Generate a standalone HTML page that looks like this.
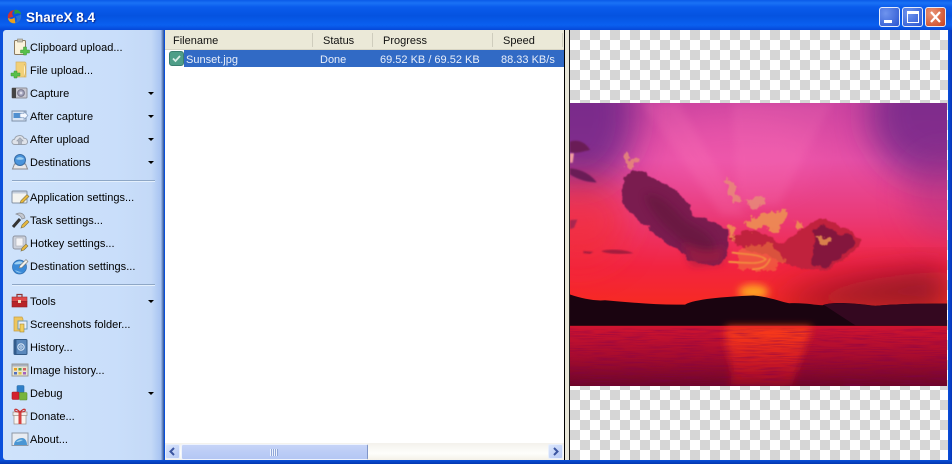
<!DOCTYPE html>
<html><head><meta charset="utf-8"><style>
*{box-sizing:border-box}
html,body{margin:0;padding:0}
body{width:952px;height:464px;overflow:hidden;position:relative;background:#0a50dc;font-family:"Liberation Sans",sans-serif}
.a{position:absolute}
#title{left:0;top:0;width:952px;height:30px;background:linear-gradient(#0a5ae8 0,#1a72f5 3px,#0a5cec 7px,#0553e0 16px,#0a60f0 25px,#0648d8 30px)}
#tt{left:26px;top:9px;font:bold 13.5px/17px "Liberation Sans",sans-serif;color:#fff;text-shadow:1px 1px 1px #0a2a90;white-space:nowrap;letter-spacing:0}
#side{left:3px;top:30px;width:161px;height:430px;background:linear-gradient(90deg,#cfe3fb 0,#c9defa 70%,#c4d9f7 92%,#a8c4f2 98%,#2f5498 100%);border-radius:3px 0 0 3px}
.m{position:absolute;left:30px;margin-top:1px;font:11px/14px "Liberation Sans",sans-serif;color:#000;white-space:nowrap;letter-spacing:.01px}
.arr{position:absolute;left:148px;width:0;height:0;border-left:3px solid transparent;border-right:3px solid transparent;border-top:3px solid #000}
.sep{position:absolute;left:12px;width:143px;background:#8ea7c6;border-bottom:1px solid #e4f0fd;height:2px}
svg.i{position:absolute;left:11px;width:18px;height:18px;overflow:visible}
#list{left:165px;top:30px;width:399px;height:430px;background:#fff}
#hdr{left:0;top:0;width:399px;height:20px;background:#ebe9d8;border-bottom:1px solid #d8d5c4}
.h{position:absolute;top:4px;font:11px/14px "Liberation Sans",sans-serif;color:#111}
.hs{position:absolute;top:3px;width:1px;height:14px;background:#cfcdbd}
#row{left:19px;top:20px;width:380px;height:17px;background:#316ac5}
.r{position:absolute;top:23px;font:11px/14px "Liberation Sans",sans-serif;color:#e8eef9;white-space:nowrap}
#sb{left:0;top:413px;width:399px;height:17px;background:linear-gradient(#f3f1ec,#fefefb 60%,#f4f1e8)}
.btn{position:absolute;top:1px;width:15px;height:15px;border-radius:2px;background:linear-gradient(135deg,#dbe6fc,#b6c9f5);border:1px solid #e8effc}
#thumb{left:16px;top:1px;width:187px;height:16px;background:linear-gradient(#c6d4f7,#bccdf6 50%,#b4c7f4);border:1px solid #eef3fd;border-right:1px solid #7f95c8;border-radius:2px}
#split{left:564px;top:30px;width:6px;height:430px;background:#e9e7da;border-left:1px solid #000;border-right:1px solid #222}
#pv{left:570px;top:30px;width:378px;height:430px;background:repeating-conic-gradient(#fff 0 25%,#d6d6d6 0 50%) 0 0/20px 20px}
.wb{position:absolute;top:7px;width:21px;height:20px;border-radius:3px;border:1px solid #e6ecfb}
#bottom{left:0;top:460px;width:952px;height:4px;background:linear-gradient(#0a50d8,#0336b0)}
#rb{left:948px;top:30px;width:4px;height:434px;background:linear-gradient(90deg,#0a50dc,#0535b8)}
</style></head><body>
<div class="a" id="title"></div>
<svg class="a" style="left:7px;top:9px" width="15" height="15" viewBox="0 0 16 16"><path d="M8 1C12 0 15 3 15 6C13 4 10 4 8 6Z" fill="#2e9c3a"/><path d="M15 6C16 10 13 15 9 15C11 13 11 10 9 8Z" fill="#2a6fd0"/><path d="M9 15C5 16 1 13 1 9C3 11 6 11 8 9Z" fill="#e8a020"/><path d="M1 10C0 6 3 1 8 1C5 3 5 6 7 8Z" fill="#d03030"/></svg>
<div class="a" id="tt">ShareX 8.4</div>
<div class="wb" style="left:879px;background:radial-gradient(circle at 30% 30%,#6f94ee,#2a55d0)"><div class="a" style="left:4px;top:12px;width:8px;height:3px;background:#fff"></div></div>
<div class="wb" style="left:902px;background:radial-gradient(circle at 30% 30%,#6f94ee,#2a55d0)"><div class="a" style="left:4px;top:3px;width:12px;height:12px;border:1px solid #fff;border-top:3px solid #fff"></div></div>
<div class="wb" style="left:925px;background:radial-gradient(circle at 30% 30%,#ea9678,#c8401c)"><svg class="a" style="left:3px;top:3px" width="13" height="12"><path d="M2 1L11 11M11 1L2 11" stroke="#fff" stroke-width="2.2"/></svg></div>

<div class="a" id="side"></div>
<div style="position:absolute;left:0;top:0">
<svg class="i" style="top:38px" viewBox="0 0 18 18"><rect x="3.500" y="2.500" width="11" height="14" rx="1" fill="#fbf3dc" stroke="#8a7a62"/><rect x="6.500" y="1" width="5" height="3" fill="#c6c2b4" stroke="#8a8474" stroke-width=".6"/><path d="M13 10h3v3h3v3h-3v2h-3v-2h-3v-3h3z" fill="#58c04a" stroke="#3a9434" stroke-width=".5" transform="translate(-.5 -1)"/></svg>
<div class="m" style="top:40px">Clipboard upload...</div>
<svg class="i" style="top:61px" viewBox="0 0 18 18"><path d="M5 1h9l1 1v14h-10z" fill="#f2d078" stroke="#d4b268" stroke-width=".7"/><path d="M13 3c2 2 2 10 0 13" fill="#fff3c6" stroke="#d4ae5a" stroke-width=".7"/><path d="M3 10h3v2h3v3h-3v2h-3v-2h-3v-3h3z" fill="#58c04a" stroke="#3a9434" stroke-width=".5"/></svg>
<div class="m" style="top:63px">File upload...</div>
<svg class="i" style="top:84px" viewBox="0 0 18 18"><rect x="1" y="4" width="15" height="10" rx="1" fill="#c8c8d2" stroke="#8c8c94"/><rect x="1" y="4" width="4" height="10" fill="#444"/><circle cx="10" cy="9" r="3.400" fill="#a0a0ba" stroke="#77778a"/><circle cx="10" cy="9" r="1.400" fill="#dcdce8"/></svg>
<div class="m" style="top:86px">Capture</div><div class="arr" style="top:92px"></div>
<svg class="i" style="top:107px" viewBox="0 0 18 18"><rect x="1" y="4" width="14" height="10" fill="#d8e4f4" stroke="#7e90a8"/><rect x="2.500" y="6" width="8" height="5" fill="#4f8fd0"/><path d="M9 6.500h4V4.500l4 4-4 4v-2H9z" fill="#f4f8ff" stroke="#7a96bc" stroke-width=".6"/></svg>
<div class="m" style="top:109px">After capture</div><div class="arr" style="top:115px"></div>
<svg class="i" style="top:130px" viewBox="0 0 18 18"><path d="M4 14.500c-4 0-4-5-.5-5.200C4.500 5 11 4 13 8.300c4-.3 5 6.200.8 6.200z" fill="#dfe3ea" stroke="#9aa2ae"/><path d="M9 7.500l3.500 3.500h-2v3.500h-3V11h-2z" fill="#aab2bf" stroke="#8a92a0" stroke-width=".5"/></svg>
<div class="m" style="top:132px">After upload</div><div class="arr" style="top:138px"></div>
<svg class="i" style="top:153px" viewBox="0 0 18 18"><path d="M1.500 16l2-5h11l2 5z" fill="#e8e8ea" stroke="#8a8a90"/><circle cx="9" cy="7" r="5.500" fill="#4a94dc" stroke="#3a6ea6"/><path d="M5 6c1-2 6-3 8 0-2 1-6 1-8 0z" fill="#9ed0f2"/></svg>
<div class="m" style="top:155px">Destinations</div><div class="arr" style="top:161px"></div>
<div class="sep" style="top:180px"></div>
<svg class="i" style="top:188px" viewBox="0 0 18 18"><rect x="1" y="3" width="15" height="12" rx="1" fill="#f4f4f0" stroke="#8492a4"/><rect x="1.500" y="3.500" width="14" height="2" fill="#c4cedc"/><path d="M9 15l1-2.500 6-6 2 2-6 6z" fill="#e8b83c" stroke="#7a7048" stroke-width=".6"/></svg>
<div class="m" style="top:190px">Application settings...</div>
<svg class="i" style="top:211px" viewBox="0 0 18 18"><path d="M2 16L9 8" stroke="#333" stroke-width="3"/><path d="M5 3c4-2 8-1 9 4l-3 1C10 5 8 4 5 3z" fill="#c4c8d0" stroke="#8a8e96" stroke-width=".7"/><path d="M10 17l1-3 5-5 2 2-5 5z" fill="#e8b83c" stroke="#7a7048" stroke-width=".6"/></svg>
<div class="m" style="top:213px">Task settings...</div>
<svg class="i" style="top:234px" viewBox="0 0 18 18"><rect x="2" y="2" width="13" height="13" rx="2" fill="#ccd1dc" stroke="#8e94a0"/><rect x="5" y="4" width="7" height="8" fill="#f4f4f6" stroke="#a8acb6" stroke-width=".6"/><path d="M10 17l1-3 4-4 2 2-4 4z" fill="#e8b83c" stroke="#7a7048" stroke-width=".6"/></svg>
<div class="m" style="top:236px">Hotkey settings...</div>
<svg class="i" style="top:257px" viewBox="0 0 18 18"><circle cx="8.500" cy="10" r="7" fill="#3a8ad8" stroke="#2f6cac" stroke-width=".7"/><path d="M3 7c2-3 8-4 9-1-2 1-6 2-9 1zM4 13c2 1 4 2 7 2-2 1-5 1-7-2z" fill="#9ed0f2"/><path d="M8 11l1-2.500 6-6 2 2-6 6z" fill="#f2f2ee" stroke="#76766e" stroke-width=".6"/></svg>
<div class="m" style="top:259px">Destination settings...</div>
<div class="sep" style="top:284px"></div>
<svg class="i" style="top:292px" viewBox="0 0 18 18"><path d="M6 5V2.500h5V5" fill="none" stroke="#8e3434" stroke-width="1.200"/><rect x="1" y="5" width="15" height="4.500" fill="#e04848" stroke="#9c2e2e" stroke-width=".6"/><rect x="1" y="9.500" width="15" height="5.500" fill="#b82428" stroke="#8e2024" stroke-width=".6"/><rect x="7" y="8" width="3" height="3" fill="#f0e0c0"/></svg>
<div class="m" style="top:294px">Tools</div><div class="arr" style="top:300px"></div>
<svg class="i" style="top:315px" viewBox="0 0 18 18"><path d="M3 2h8l1 2v12H3z" fill="#eec65e" stroke="#c49c44" stroke-width=".7"/><rect x="7" y="6" width="9" height="8" fill="#eaf0f6" stroke="#6e9ab8"/><rect x="9" y="9" width="4" height="8" fill="#f2cf5c" stroke="#a08838" stroke-width=".6"/></svg>
<div class="m" style="top:317px">Screenshots folder...</div>
<svg class="i" style="top:338px" viewBox="0 0 18 18"><rect x="3" y="1.500" width="13" height="15" rx="1" fill="#5a88bc" stroke="#335a86"/><rect x="3" y="1.500" width="2.500" height="15" fill="#335c8c"/><circle cx="10" cy="9" r="3.200" fill="none" stroke="#d4e4f6" stroke-width="1.100"/><circle cx="10" cy="9" r="1.200" fill="none" stroke="#d4e4f6" stroke-width=".8"/></svg>
<div class="m" style="top:340px">History...</div>
<svg class="i" style="top:361px" viewBox="0 0 18 18"><rect x="1" y="3" width="16" height="12" fill="#e8e4cc" stroke="#9a9a96"/><rect x="1.500" y="3.500" width="15" height="2" fill="#aab2c2"/><rect x="3" y="7" width="3" height="2.500" fill="#e8a020"/><rect x="7.500" y="7" width="3" height="2.500" fill="#50a050"/><rect x="12" y="7" width="3" height="2.500" fill="#d06060"/><rect x="3" y="11" width="3" height="2.500" fill="#5070c0"/><rect x="7.500" y="11" width="3" height="2.500" fill="#e0c040"/><rect x="12" y="11" width="3" height="2.500" fill="#a060c0"/></svg>
<div class="m" style="top:363px">Image history...</div>
<svg class="i" style="top:384px" viewBox="0 0 18 18"><rect x="6" y="1.500" width="7" height="7" rx="1" fill="#2f7fc8" stroke="#2a6aa4" stroke-width=".6"/><rect x="1" y="8" width="7" height="7.500" rx="1" fill="#d4202c" stroke="#a01c20" stroke-width=".6"/><rect x="8.500" y="8.500" width="7.500" height="7.500" rx="1" fill="#78b43c" stroke="#5a8e2c" stroke-width=".6"/></svg>
<div class="m" style="top:386px">Debug</div><div class="arr" style="top:392px"></div>
<svg class="i" style="top:407px" viewBox="0 0 18 18"><rect x="3" y="8" width="12" height="9" fill="#f8f4f0" stroke="#9c8c84" stroke-width=".7"/><rect x="2" y="5" width="14" height="3.500" fill="#f4eeea" stroke="#9c8c84" stroke-width=".7"/><rect x="7.500" y="5" width="3" height="12" fill="#d44040"/><path d="M9 5C5 1 3 2 4 4c1 1 3 1 5 1zM9 5c4-4 6-3 5-1-1 1-3 1-5 1z" fill="none" stroke="#c83030" stroke-width="1.200"/></svg>
<div class="m" style="top:409px">Donate...</div>
<svg class="i" style="top:430px" viewBox="0 0 18 18"><rect x="1" y="3" width="16" height="12.500" fill="#e8ecf2" stroke="#8e98a6"/><path d="M3 15c0-5 5-7 8-7s5 3 5 7z" fill="#4a96d4"/><path d="M5 12c2-2 5-3 7-2-2 1-4 2-7 2z" fill="#a6d4f0"/></svg>
<div class="m" style="top:432px">About...</div>
</div>

<div class="a" id="list">
<div class="a" id="hdr"></div>
<div class="h" style="left:8px">Filename</div><div class="hs" style="left:147px"></div>
<div class="h" style="left:158px">Status</div><div class="hs" style="left:207px"></div>
<div class="h" style="left:218px">Progress</div><div class="hs" style="left:327px"></div>
<div class="h" style="left:338px">Speed</div><div class="hs" style="left:397px"></div>
<div class="a" id="row"></div>
<svg class="a" style="left:4px;top:21px" width="15" height="15" viewBox="0 0 15 15"><rect x=".5" y=".5" width="14" height="14" rx="2.500" fill="#4f9e88" stroke="#3a7f70"/><path d="M4 7.500l2.500 2.500 4.500-5" fill="none" stroke="#d8ece6" stroke-width="1.800"/></svg>
<div class="r" style="left:21px">Sunset.jpg</div>
<div class="r" style="left:155px">Done</div>
<div class="r" style="left:215px">69.52 KB / 69.52 KB</div>
<div class="r" style="left:336px">88.33 KB/s</div>
<div class="a" id="sb">
<div class="btn" style="left:0"><svg width="13" height="13" style="display:block"><path d="M8 3L4.500 6.500 8 10" fill="none" stroke="#3b55a0" stroke-width="2"/></svg></div>
<div class="a" id="thumb"><svg class="a" style="left:88px;top:4px" width="8" height="7"><path d="M.5 0v7M2.500 0v7M4.500 0v7M6.500 0v7" stroke="#eef3fd"/><path d="M1.500 0v7M3.500 0v7M5.500 0v7M7.500 0v7" stroke="#8fa6d8"/></svg></div>
<div class="btn" style="left:383px"><svg width="13" height="13" style="display:block"><path d="M5 3L8.500 6.500 5 10" fill="none" stroke="#3b55a0" stroke-width="2"/></svg></div>
</div>
</div>
<div class="a" id="split"></div>

<div class="a" id="pv"></div>
<svg class="a" style="left:570px;top:103px" width="377" height="283" viewBox="15 24 1130 848" preserveAspectRatio="none">
<defs>
<linearGradient id="sky" x1="0" y1="0" x2="0" y2="1">
<stop offset="0" stop-color="#cc44a0"/><stop offset=".2" stop-color="#e650a6"/><stop offset=".4" stop-color="#ea3a78"/><stop offset=".58" stop-color="#f22440"/><stop offset=".76" stop-color="#f82c18"/><stop offset="1" stop-color="#f02a0c"/>
</linearGradient>
<linearGradient id="sea" x1="0" y1="0" x2="0" y2="1"><stop offset="0" stop-color="#d01430"/><stop offset=".5" stop-color="#a80c2e"/><stop offset="1" stop-color="#6c0628"/></linearGradient>
<linearGradient id="ref" x1="0" y1="0" x2="0" y2="1"><stop offset="0" stop-color="#ff4214"/><stop offset="1" stop-color="#e01020" stop-opacity=".35"/></linearGradient>
<filter id="b2"><feGaussianBlur stdDeviation="2"/></filter>
<filter id="b8" x="-30%" y="-30%" width="160%" height="160%"><feGaussianBlur stdDeviation="12"/></filter>
<filter id="b30" x="-60%" y="-60%" width="220%" height="220%"><feGaussianBlur stdDeviation="50"/></filter>
<filter id="cl" x="-20%" y="-20%" width="140%" height="140%"><feTurbulence type="fractalNoise" baseFrequency=".035" numOctaves="4" seed="4" result="n"/><feDisplacementMap in="SourceGraphic" in2="n" scale="24" xChannelSelector="R" yChannelSelector="G"/><feGaussianBlur stdDeviation="1.800"/></filter>
<filter id="gold" x="-20%" y="-20%" width="140%" height="140%"><feTurbulence type="fractalNoise" baseFrequency=".06" numOctaves="3" seed="9" result="n"/><feDisplacementMap in="SourceGraphic" in2="n" scale="30" xChannelSelector="R" yChannelSelector="G"/><feGaussianBlur stdDeviation="1.500"/></filter>
<filter id="rip" x="0" y="0" width="100%" height="100%"><feTurbulence type="fractalNoise" baseFrequency=".012 .28" numOctaves="3" seed="3"/><feColorMatrix values="0 0 0 0 .2  0 0 0 0 0  0 0 0 0 .08  1.800 0 0 0 -.75"/></filter>
</defs>
<rect x="15" y="24" width="1130" height="848" fill="url(#sky)"/>
<ellipse cx="40" cy="60" rx="170" ry="220" fill="#5e2484" opacity=".75" filter="url(#b30)"/>
<ellipse cx="1120" cy="60" rx="210" ry="200" fill="#5e2484" opacity=".7" filter="url(#b30)"/>
<ellipse cx="1140" cy="300" rx="110" ry="130" fill="#a02c80" opacity=".35" filter="url(#b30)"/>
<ellipse cx="40" cy="380" rx="150" ry="130" fill="#f52a20" opacity=".5" filter="url(#b30)"/>
<ellipse cx="520" cy="170" rx="240" ry="120" fill="#ff66b4" opacity=".3" filter="url(#b30)"/>
<path d="M230 24L470 360 540 360 340 24z" fill="#ff80bc" opacity=".18" filter="url(#b8)"/>
<path d="M500 24L520 330 640 330 800 24z" fill="#ff80bc" opacity=".16" filter="url(#b8)"/>
<path d="M640 625C760 560 1000 535 1145 525V640H640z" fill="#6a0828" opacity=".8" filter="url(#b30)"/>
<ellipse cx="565" cy="590" rx="45" ry="22" fill="#ffa820" opacity=".95" filter="url(#b8)"/>
<path d="M170 290C172 255 180 235 205 225 240 225 255 245 290 262 340 285 375 320 380 352 420 380 470 375 485 405 495 440 490 490 465 505 420 512 375 510 350 470 310 455 260 405 235 385 195 350 165 320 170 290z" fill="#7a1a50" filter="url(#cl)"/>
<path d="M240 300C280 290 320 330 360 375 410 405 455 420 450 475 410 490 375 465 335 425 290 390 250 345 240 300z" fill="#5e1238" opacity=".55" filter="url(#b8)"/>
<path d="M350 440C400 470 450 470 480 450L470 505 380 512z" fill="#a01a40" opacity=".7" filter="url(#b8)"/>
<path d="M495 425C530 395 590 405 640 445 690 425 725 380 780 370 820 405 875 405 890 438 860 470 830 505 770 530 710 525 660 505 600 480 550 470 515 465 495 425z" fill="#c0203c" filter="url(#cl)"/>
<path d="M745 400C770 378 800 405 830 420 875 412 885 440 848 468 820 495 780 525 748 515 725 490 760 450 745 400z" fill="#84183e" filter="url(#cl)"/>
<g fill="#e88a78" filter="url(#gold)" opacity=".85">
<path d="M178 175l12 0 2 20 20-12 8 14-20 24-20-10z"/>
<path d="M480 250l28 6 4 40 20 22-24 4-18-30z"/>
<path d="M535 315l60-10 6 20-40 16z"/>
</g>
<g fill="#ee9a50" filter="url(#gold)" opacity=".8">
<path d="M535 380l60-25 70-10-10 40-20 30-40-25-30 15z"/>
<path d="M490 385l18 5-4 45-10-10z"/>
<path d="M690 370l25 25-20 10z"/>
<path d="M750 425l50 8-25 25z"/>
</g>
<g fill="none" stroke="#f6c43c" stroke-width="4" filter="url(#b2)">
<path d="M500 472C540 478 580 476 602 492 585 510 540 502 490 500M560 522C590 522 605 515 615 490"/>
</g>
<g fill="#f07a3c" opacity=".55" filter="url(#gold)"><path d="M520 460l100-20 40 60-50 30-90-10z"/></g>
<path d="M15 140C40 130 65 145 75 165 50 170 30 178 15 170zM15 220C50 222 80 240 95 262 60 262 30 248 15 238z" fill="#6a1e56" filter="url(#b2)"/>
<path d="M15 175l12 0-4 28-8 0z" fill="#f4a0a0" filter="url(#b2)"/>
<path d="M108 468C130 460 180 462 205 474 170 478 130 478 108 468zM55 468l30 2-10 6-20-2z" fill="#a41c3c" filter="url(#b2)"/>
<path d="M15 375l22-2-10 25-12 4z" fill="#a82850" filter="url(#b2)"/>
<path d="M15 598C50 610 90 618 120 615C200 622 280 630 360 628C390 612 470 605 565 601C610 604 650 620 672 624C720 622 750 630 772 630C800 620 850 622 930 632C1000 625 1080 625 1145 625V692H15z" fill="#1a0410"/>
<path d="M775 628C830 618 880 628 930 632C1000 625 1080 625 1145 625V690H870C840 670 800 645 775 628z" fill="#340820"/>
<rect x="15" y="692" width="1130" height="180" fill="url(#sea)"/>
<path d="M485 694H740L680 872H490C520 810 465 760 485 694z" fill="url(#ref)" filter="url(#b8)"/>
<rect x="15" y="700" width="1130" height="172" filter="url(#rip)" opacity=".6"/>
</svg>

<div class="a" id="rb"></div>
<div class="a" id="bottom"></div>
</body></html>
